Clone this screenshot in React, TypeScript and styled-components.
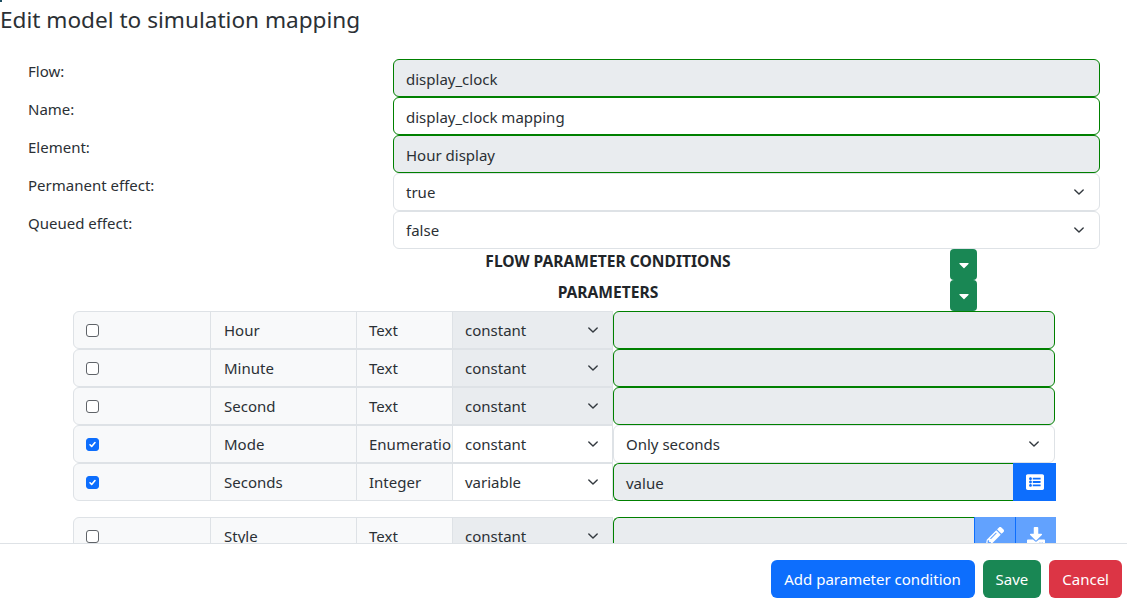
import * as React from "react";
import styled, { createGlobalStyle, css } from "styled-components";
import { FaCaretDown, FaDownload, FaListAlt, FaPencilAlt } from "react-icons/fa";

const GlobalStyle = createGlobalStyle`
  * { box-sizing: border-box; }
  html, body { margin: 0; height: 100%; background: #fff; }
  body {
    font-family: "Noto Sans", "Open Sans", sans-serif;
    font-size: 15px;
    line-height: 24px;
    color: #2b3035;
  }
`;

const Page = styled.div`
  position: relative;
  height: 607px;
  display: flex;
  flex-direction: column;
  overflow: hidden;
`;

const CornerMark = styled.span`
  position: absolute;
  left: 0;
  top: 0;
  width: 2px;
  height: 2px;
  background: #1c4f63;
`;

const Title = styled.h5`
  margin: 0;
  height: 39px;
  font-size: 22.6px;
  font-weight: 400;
  line-height: 39px;
`;

const Body = styled.div`
  flex: 1;
  min-height: 0;
  overflow: hidden;
  padding: 20px 27px 0 28px;
`;

const FormRow = styled.div`
  display: grid;
  grid-template-columns: 365px 1fr;
  height: 38px;
`;

const FormLabel = styled.label`
  display: block;
  line-height: 24px;
`;

const Control = styled.div<{ $valid?: boolean; $disabled?: boolean; $flat?: boolean }>`
  height: 38px;
  min-width: 0;
  display: flex;
  align-items: center;
  justify-content: space-between;
  padding: ${p => (p.$valid ? "1px" : "0")} ${p => (p.$flat ? "11px" : "12px")} 0 12px;
  overflow: hidden;
  white-space: nowrap;
  background: ${p => (p.$disabled ? "#e9ecef" : "#fff")};
  border: 1px solid ${p => (p.$valid ? "#008000" : "#dee2e6")};
  border-radius: ${p => (p.$flat ? "0" : "6px")};
`;

const SectionHead = styled.div`
  position: relative;
  height: 31px;
  padding-left: 88px;
`;

const SectionTitle = styled.div`
  text-align: center;
  color: #212529;
  font-weight: 700;
  font-size: 15.6px;
  line-height: 25px;
`;

const CaretButton = styled.button`
  position: absolute;
  left: 922px;
  top: 0;
  width: 27px;
  height: 31px;
  padding: 0;
  display: flex;
  align-items: center;
  justify-content: center;
  color: #fff;
  background: #198754;
  border: 0;
  border-radius: 4px;
  font-size: 16px;
`;

const ParamList = styled.div`
  margin: 0 0 0 45px;
  width: 982px;
`;

const ParamRow = styled.div<{ $gap?: boolean }>`
  display: grid;
  grid-template-columns: 137px 146px 96px 161px 1fr;
  height: 38px;
  ${p =>
    p.$gap &&
    css`
      margin-top: 16px;
    `}
`;

const Cell = styled.div<{ $first?: boolean }>`
  display: flex;
  align-items: center;
  min-width: 0;
  padding: 0 12px;
  overflow: hidden;
  white-space: nowrap;
  background: #f8f9fa;
  border: 1px solid #dee2e6;
  margin-right: -1px;
  ${p =>
    p.$first &&
    css`
      border-radius: 6px 0 0 6px;
    `}
`;

const NameCell = styled(Cell)`
  padding-left: 13px;
`;

const ValueGroup = styled.div`
  display: flex;
  min-width: 0;
  width: 443px;
`;

const ValueInput = styled(Control)`
  flex: 1;
  border-right: 0;
  border-radius: 6px 0 0 6px;
`;

const IconButton = styled.button<{ $disabled?: boolean; $wide?: boolean }>`
  width: ${p => (p.$wide ? "43px" : "41px")};
  height: 38px;
  padding: 0 ${p => (p.$disabled ? "1px" : "0")} 0 0;
  flex: none;
  display: flex;
  align-items: center;
  justify-content: center;
  color: #fff;
  font-size: 18px;
  background: ${p => (p.$disabled ? "#62a2fe" : "#0d6efd")};
  border: 0;
  border-left: ${p => (p.$disabled ? "1px solid #0d6efd" : "0")};
`;

const CheckBox = styled.span<{ $checked?: boolean }>`
  width: 13px;
  height: 13px;
  display: flex;
  align-items: center;
  justify-content: center;
  border-radius: 3px;
  background: ${p => (p.$checked ? "#0d6efd" : "#fff")};
  border: 1px solid ${p => (p.$checked ? "#0d6efd" : "#5f6368")};
`;

const Footer = styled.div`
  height: 64px;
  flex: none;
  display: flex;
  justify-content: flex-end;
  align-items: flex-start;
  gap: 8px;
  padding: 16px 5px 0 0;
  background: #fff;
  border-top: 1px solid #dee2e6;
`;

const Button = styled.button<{ $color: string }>`
  height: 38px;
  padding: 0 13px;
  color: #fff;
  font: inherit;
  background: ${p => p.$color};
  border: 0;
  border-radius: 6px;
`;

const AddButton = styled(Button)`
  min-width: 204px;
`;

function Chevron() {
  return (
    <svg width="16" height="16" viewBox="0 0 16 16" fill="none" style={{ flex: "none" }}>
      <path d="M2 5l6 6 6-6" stroke="#343a40" strokeWidth="2" strokeLinecap="round" strokeLinejoin="round" transform="translate(2.4 2.4) scale(.7)" />
    </svg>
  );
}

function Check({ checked }: { checked?: boolean }) {
  return (
    <CheckBox $checked={checked}>
      {checked && (
        <svg width="13" height="13" viewBox="0 0 20 20" fill="none">
          <path d="M5.5 10.5l3 3 6-7" stroke="#fff" strokeWidth="3" strokeLinecap="round" strokeLinejoin="round" />
        </svg>
      )}
    </CheckBox>
  );
}

const textParams = ["Hour", "Minute", "Second"];

function ParamHead({ name, type, checked }: { name: string; type: string; checked?: boolean }) {
  return (
    <>
      <Cell $first>
        <Check checked={checked} />
      </Cell>
      <NameCell>{name}</NameCell>
      <Cell>{type}</Cell>
    </>
  );
}

export default function App() {
  return (
    <Page>
      <GlobalStyle />
      <CornerMark />
      <Title>Edit model to simulation mapping</Title>
      <Body>
        <FormRow>
          <FormLabel>Flow:</FormLabel>
          <Control $valid $disabled>display_clock</Control>
        </FormRow>
        <FormRow>
          <FormLabel>Name:</FormLabel>
          <Control $valid>display_clock mapping</Control>
        </FormRow>
        <FormRow>
          <FormLabel>Element:</FormLabel>
          <Control $valid $disabled>Hour display</Control>
        </FormRow>
        <FormRow>
          <FormLabel>Permanent effect:</FormLabel>
          <Control>true<Chevron /></Control>
        </FormRow>
        <FormRow>
          <FormLabel>Queued effect:</FormLabel>
          <Control>false<Chevron /></Control>
        </FormRow>

        <SectionHead>
          <SectionTitle>FLOW PARAMETER CONDITIONS</SectionTitle>
          <CaretButton><FaCaretDown /></CaretButton>
        </SectionHead>
        <SectionHead>
          <SectionTitle>PARAMETERS</SectionTitle>
          <CaretButton><FaCaretDown /></CaretButton>
        </SectionHead>

        <ParamList>
          {textParams.map(name => (
            <ParamRow key={name}>
              <ParamHead name={name} type="Text" />
              <Control $disabled $flat>constant<Chevron /></Control>
              <Control $valid $disabled />
            </ParamRow>
          ))}
          <ParamRow>
            <ParamHead name="Mode" type="Enumeration" checked />
            <Control $flat>constant<Chevron /></Control>
            <Control>Only seconds<Chevron /></Control>
          </ParamRow>
          <ParamRow>
            <ParamHead name="Seconds" type="Integer" checked />
            <Control $flat>variable<Chevron /></Control>
            <ValueGroup>
              <ValueInput $valid $disabled>value</ValueInput>
              <IconButton $wide><FaListAlt /></IconButton>
            </ValueGroup>
          </ParamRow>
          <ParamRow $gap>
            <ParamHead name="Style" type="Text" />
            <Control $disabled $flat>constant<Chevron /></Control>
            <ValueGroup>
              <ValueInput $valid $disabled />
              <IconButton $disabled><FaPencilAlt /></IconButton>
              <IconButton $disabled><FaDownload /></IconButton>
            </ValueGroup>
          </ParamRow>
        </ParamList>
      </Body>
      <Footer>
        <AddButton $color="#0d6efd">Add parameter condition</AddButton>
        <Button $color="#198754">Save</Button>
        <Button $color="#dc3545">Cancel</Button>
      </Footer>
    </Page>
  );
}
